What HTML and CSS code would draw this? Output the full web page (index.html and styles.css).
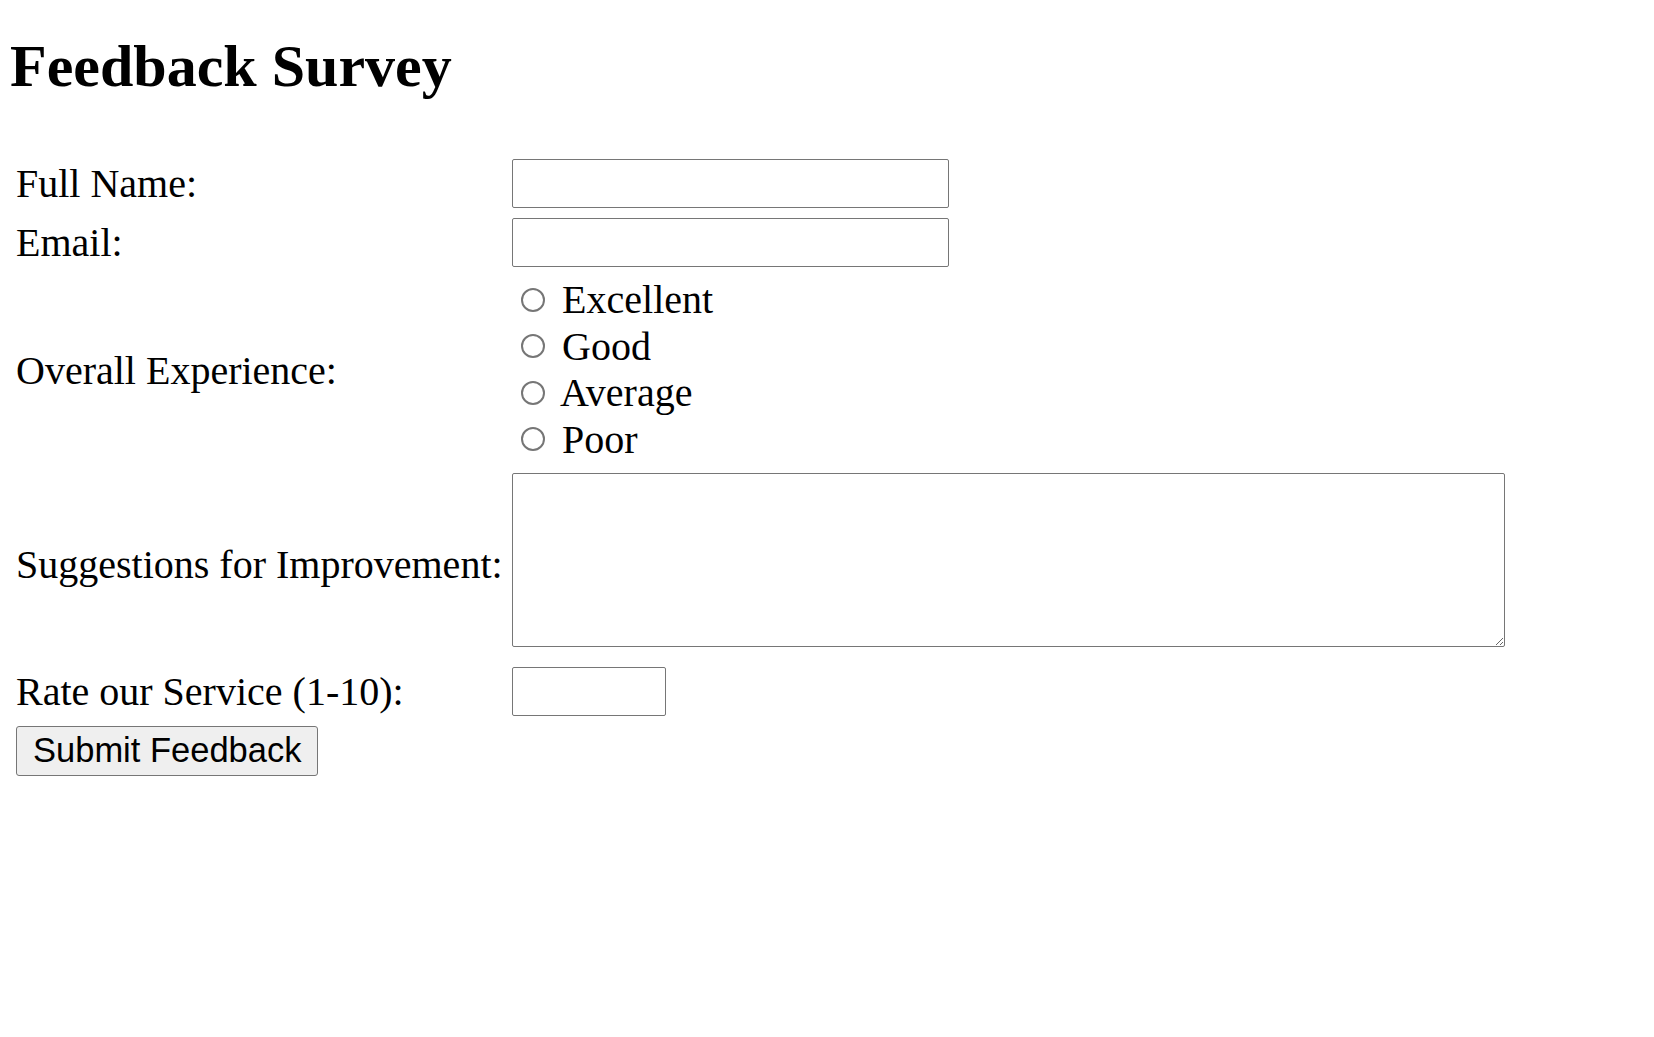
FILE: index.html
```html
<!DOCTYPE html>
<html lang="en">
<head>
<meta charset="utf-8">
<title>Feedback Survey</title>
<link rel="stylesheet" href="styles.css">
</head>
<body>
<h1 class="title">Feedback Survey</h1>
<form class="survey">
  <div class="grid">
    <label class="lbl" for="name">Full Name:</label>
    <div class="field"><input class="text" id="name" type="text"></div>

    <label class="lbl" for="email">Email:</label>
    <div class="field"><input class="text" id="email" type="email"></div>

    <span class="lbl">Overall Experience:</span>
    <div class="field radios">
      <label class="opt"><input class="radio" type="radio" name="exp"> Excellent</label>
      <label class="opt"><input class="radio" type="radio" name="exp"> Good</label>
      <label class="opt"><input class="radio" type="radio" name="exp"> Average</label>
      <label class="opt"><input class="radio" type="radio" name="exp"> Poor</label>
    </div>

    <label class="lbl" for="sugg">Suggestions for Improvement:</label>
    <div class="field area-cell"><textarea class="area" id="sugg"></textarea></div>

    <label class="lbl" for="rate">Rate our Service (1-10):</label>
    <div class="field"><input class="num" id="rate" type="text"></div>
  </div>
  <div class="actions"><button class="submit" type="submit">Submit Feedback</button></div>
</form>
</body>
</html>
```

FILE: styles.css
```css
html, body {
  background: #ffffff;
}

body {
  margin: 0;
  padding: 0 0 0 10px;
  font-family: "Liberation Serif", "Times New Roman", serif;
  color: #000000;
}

.title {
  margin: 32px 0 58px 0;
  font-size: 60px;
  font-weight: bold;
  line-height: normal;
}

.survey {
  margin: 0 0 0 6px;
}

.grid {
  display: grid;
  grid-template-columns: max-content 1fr;
  column-gap: 9px;
  row-gap: 10px;
  font-size: 40px;
  line-height: normal;
}

.lbl {
  align-self: center;
}

.field {
  display: flex;
  flex-direction: column;
  align-items: flex-start;
}

.text,
.num {
  box-sizing: border-box;
  height: 49px;
  margin: 0;
  padding: 0 4px;
  border: 1px solid #767676;
  border-radius: 2px;
  background: #ffffff;
  font: 20px "Liberation Sans", Arial, sans-serif;
}

.text {
  width: 437px;
}

.num {
  width: 154px;
}

.radios {
  line-height: 46.5px;
}

.opt {
  display: block;
  white-space: nowrap;
}

.radio {
  appearance: none;
  -webkit-appearance: none;
  display: inline-block;
  box-sizing: border-box;
  width: 24px;
  height: 24px;
  margin: 0 7px 1.5px 9.5px;
  border: 2px solid #767676;
  border-radius: 50%;
  background: #ffffff;
  vertical-align: baseline;
}

.area-cell {
  padding-bottom: 9.5px;
}

.area {
  box-sizing: border-box;
  display: block;
  width: 993px;
  height: 174px;
  margin: 0;
  border: 1px solid #767676;
  border-radius: 2px;
  font: 20px "Liberation Mono", monospace;
}

.actions {
  margin-top: 10px;
}

.submit {
  box-sizing: border-box;
  height: 50px;
  margin: 0;
  padding: 0 16px;
  border: 1px solid #767676;
  border-radius: 3px;
  background: #efefef;
  color: #000000;
  font: 34.5px "Liberation Sans", Arial, sans-serif;
  line-height: normal;
}
```
